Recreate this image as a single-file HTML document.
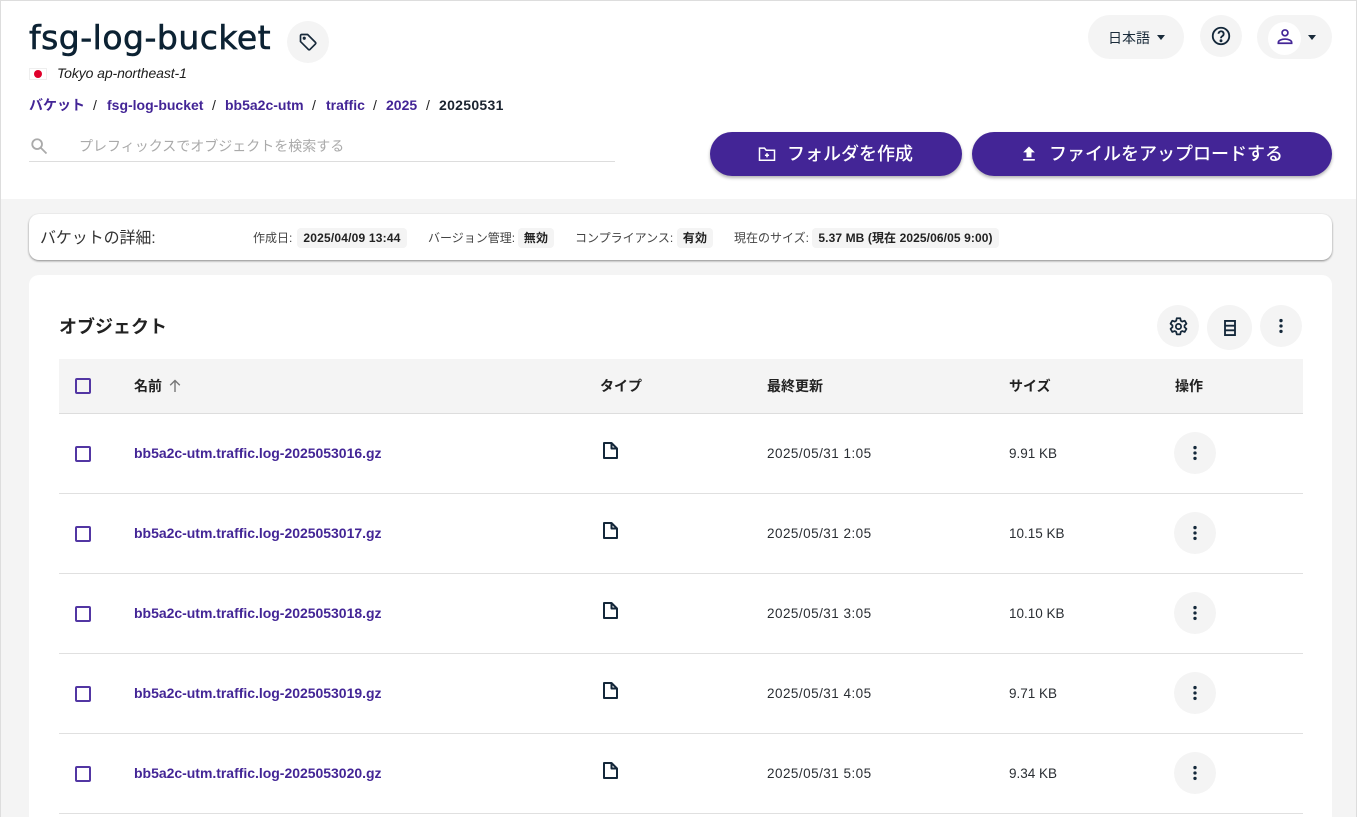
<!DOCTYPE html>
<html lang="ja"><head><meta charset="utf-8"><title>fsg-log-bucket</title>
<style>
*{box-sizing:border-box}
html,body{margin:0;padding:0;width:1357px;height:817px;overflow:hidden;background:#f4f4f4}
body{position:relative;font-family:"Liberation Sans","Noto Sans CJK JP",sans-serif;color:#1f2329}
.a{position:absolute;white-space:nowrap}
.hdr{left:0;top:0;width:1357px;height:199px;background:#fff;border-top:1px solid #ddd;border-left:1px solid #ddd;border-right:1px solid #ddd}
.edge{left:0;top:199px;width:1px;height:618px;background:#ddd}
.edge2{left:1356px;top:199px;width:1px;height:618px;background:#ddd}
.c{border-radius:50%;background:#f4f4f4;display:flex;align-items:center;justify-content:center}
.pill{background:#f4f4f4;border-radius:22px}
a{color:#432596;text-decoration:none}
.bc{font-size:14px;font-weight:700;top:97px;line-height:16px}
.sl{font-weight:400;color:#222}
.btn{background:#432596;border-radius:22px;height:44px;top:132px;box-shadow:0 2px 3px rgba(0,0,0,.3);color:#fff;font-size:18px;font-weight:500;line-height:44px}
.lbl{font-size:12px;color:#444;top:230px;line-height:16px}
.val{font-size:12px;font-weight:700;top:228px;height:20px;line-height:20px;background:#f4f4f4;border-radius:4px;text-align:center;color:#222;letter-spacing:.2px}
.th{font-size:14px;font-weight:700;top:377px;line-height:18px;color:#222}
.cb{left:75px;width:15.500px;height:16px;border:2px solid #5236a3;border-radius:2px}
.row{left:59px;width:1244px;height:1px;background:#e0e0e0}
.name{left:134px;font-size:14px;font-weight:700;line-height:18px;letter-spacing:-.02px}
.td{font-size:13.500px;line-height:18px;color:#2a2e33}
.dt{letter-spacing:.47px}
</style></head><body>
<div class="a hdr"></div><div class="a edge"></div><div class="a edge2"></div>

<div class="a" style="left:29px;top:18px;font-family:'DejaVu Sans',sans-serif;font-size:33px;line-height:40px;font-weight:400;color:#0c2233;letter-spacing:.5px;-webkit-text-stroke:.6px #0c2233">fsg-log-bucket</div>
<div class="a c" style="left:287px;top:21px;width:42px;height:42px"><svg width="20" height="20" viewBox="0 0 24 24" fill="none" stroke="#17293a" stroke-width="2" stroke-linejoin="round"><path d="M3 4.500A1.500 1.500 0 0 1 4.500 3h7l9.300 9.300a1.600 1.600 0 0 1 0 2.200l-6.300 6.300a1.600 1.600 0 0 1-2.200 0L3 11.500z"/><circle cx="7.500" cy="7.500" r=".9" fill="#17293a"/></svg></div>
<div class="a" style="left:29px;top:68px;width:18px;height:12px;background:#fff;border:1px solid #eee"></div>
<div class="a" style="left:34px;top:70px;width:8px;height:8px;border-radius:50%;background:#e0002b"></div>
<div class="a" style="left:57px;top:65px;font-size:14px;line-height:16px;font-style:italic;color:#1c1c1c;letter-spacing:-.1px">Tokyo ap-northeast-1</div>

<div class="a bc" style="left:29px"><a>バケット</a></div>
<div class="a bc sl" style="left:93px">/</div>
<div class="a bc" style="left:107px"><a>fsg-log-bucket</a></div>
<div class="a bc sl" style="left:212px">/</div>
<div class="a bc" style="left:225px"><a>bb5a2c-utm</a></div>
<div class="a bc sl" style="left:312px">/</div>
<div class="a bc" style="left:326px"><a>traffic</a></div>
<div class="a bc sl" style="left:373px">/</div>
<div class="a bc" style="left:386px"><a>2025</a></div>
<div class="a bc sl" style="left:426px">/</div>
<div class="a bc" style="left:439px;color:#1b2430;letter-spacing:.3px">20250531</div>

<svg class="a" style="left:30px;top:137px" width="18" height="18" viewBox="0 0 24 24" fill="none" stroke="#aaa" stroke-width="2.400"><circle cx="9.500" cy="9.500" r="6.500"/><path d="M14.500 14.500L22 22"/></svg>
<div class="a" style="left:79px;top:137px;font-size:14px;line-height:18px;color:#aaa">プレフィックスでオブジェクトを検索する</div>
<div class="a" style="left:29px;top:161px;width:586px;height:1px;background:#ddd"></div>

<div class="a pill" style="left:1088px;top:15px;width:96px;height:44px"></div>
<div class="a" style="left:1108px;top:29px;font-size:14px;line-height:18px;color:#1a2b3a">日本語</div>
<div class="a" style="left:1157px;top:35px;width:0;height:0;border:4.500px solid transparent;border-top:5px solid #1a2b3a;border-bottom:0"></div>
<div class="a c" style="left:1200px;top:15px;width:42px;height:42px"><svg width="22" height="22" viewBox="0 0 24 24" fill="none" stroke="#14283a" stroke-width="2"><circle cx="12" cy="12" r="9"/><path d="M9.300 9.600a2.800 2.800 0 1 1 4.300 2.400c-1 .6-1.600 1.200-1.600 2.400"/><circle cx="12" cy="17.200" r=".6" fill="#14283a"/></svg></div>
<div class="a pill" style="left:1257px;top:15px;width:75px;height:44px"></div>
<div class="a c" style="left:1268px;top:22px;width:33px;height:33px;background:#fff"></div>
<svg class="a" style="left:1275px;top:27px" width="20" height="20" viewBox="0 0 24 24" fill="none" stroke="#432596" stroke-width="2"><circle cx="12" cy="7" r="3.500"/><path d="M4 19.500v-1c0-2.500 4-4 8-4s8 1.500 8 4v1z"/></svg>
<div class="a" style="left:1308px;top:35px;width:0;height:0;border:4.500px solid transparent;border-top:5px solid #1a2b3a;border-bottom:0"></div>

<div class="a btn" style="left:710px;width:252px"><svg style="position:absolute;left:47px;top:12px" width="20" height="20" viewBox="0 0 24 24" fill="none" stroke="#fff" stroke-width="1.800"><path d="M3 5h6l2 2.500h10v12H3z"/><path d="M12 11v5M9.500 13.500h5"/></svg><span style="position:absolute;left:77px">フォルダを作成</span></div>
<div class="a btn" style="left:972px;width:360px"><svg style="position:absolute;left:47px;top:12px" width="20" height="20" viewBox="0 0 24 24" fill="#fff"><path d="M9 16V10H5l7-7 7 7h-4v6zM5 18h14v2H5z"/></svg><span style="position:absolute;left:77px">ファイルをアップロードする</span></div>

<div class="a" style="left:29px;top:214px;width:1303px;height:46px;background:#fff;border-radius:10px;box-shadow:0 1px 2px rgba(0,0,0,.45)"></div>
<div class="a" style="left:40px;top:230px;font-size:16px;line-height:18px;color:#333;letter-spacing:-.1px">バケットの詳細:</div>
<div class="a lbl" style="left:253px">作成日:</div>
<div class="a val" style="left:297px;width:110px">2025/04/09 13:44</div>
<div class="a lbl" style="left:428px">バージョン管理:</div>
<div class="a val" style="left:518px;width:36px">無効</div>
<div class="a lbl" style="left:575px">コンプライアンス:</div>
<div class="a val" style="left:677px;width:36px">有効</div>
<div class="a lbl" style="left:734px">現在のサイズ:</div>
<div class="a val" style="left:812px;width:187px;letter-spacing:.1px">5.37 MB (現在 2025/06/05 9:00)</div>

<div class="a" style="left:29px;top:275px;width:1303px;height:560px;background:#fff;border-radius:10px"></div>
<div class="a" style="left:59px;top:317px;font-size:18px;line-height:20px;font-weight:700;color:#222">オブジェクト</div>

<div class="a c" style="left:1157px;top:305px;width:42px;height:42px"><svg width="21" height="21" viewBox="0 0 24 24" fill="none" stroke="#14283a" stroke-width="2" stroke-linejoin="round"><circle cx="12" cy="12" r="3"/><path d="M10 2.500h4l.6 2.900 1.700 1 2.800-1 2 3.400-2.200 2 0 2 2.200 1.900-2 3.500-2.800-1-1.700 1-.6 2.800h-4l-.6-2.800-1.700-1-2.800 1-2-3.500 2.200-1.900v-2l-2.200-2 2-3.400 2.800 1 1.700-1z"/></svg></div>
<div class="a c" style="left:1207px;top:305px;width:45px;height:45px"><svg width="20" height="20" viewBox="0 0 24 24" fill="none" stroke="#14283a" stroke-width="2.200"><path d="M6 3.500h12v17H6zM6 9.200h12M6 14.800h12"/></svg></div>
<div class="a c" style="left:1260px;top:305px;width:42px;height:42px"><svg width="20" height="20" viewBox="0 0 24 24" fill="#14283a"><circle cx="12" cy="5.500" r="2"/><circle cx="12" cy="12" r="2"/><circle cx="12" cy="18.500" r="2"/></svg></div>

<div class="a" style="left:59px;top:359px;width:1244px;height:55px;background:#f4f4f4;border-bottom:1px solid #ddd"></div>
<div class="a cb" style="top:378px"></div>
<div class="a th" style="left:134px">名前</div>
<svg class="a" style="left:167px;top:378px" width="16" height="16" viewBox="0 0 16 16" fill="none" stroke="#777" stroke-width="1.400"><path d="M8 14V2.500M3.200 7.200L8 2.500l4.800 4.700"/></svg>
<div class="a th" style="left:600px">タイプ</div>
<div class="a th" style="left:767px">最終更新</div>
<div class="a th" style="left:1009px">サイズ</div>
<div class="a th" style="left:1175px">操作</div>

<div class="a cb" style="top:446px"></div>
<a class="a name" style="top:444px">bb5a2c-utm.traffic.log-2025053016.gz</a>
<svg class="a" style="left:601px;top:441px" width="20" height="20" viewBox="0 0 20 20" fill="none" stroke="#14283a" stroke-width="2" stroke-linejoin="round"><path d="M3 2h7.500L16 7.500V17H3z"/><path d="M10.500 2v5.500H16"/></svg>
<div class="a td dt" style="left:767px;top:445px">2025/05/31 1:05</div>
<div class="a td" style="left:1009px;top:445px">9.91 KB</div>
<div class="a c" style="left:1174px;top:432px;width:42px;height:42px"><svg width="20" height="20" viewBox="0 0 24 24" fill="#14283a"><circle cx="12" cy="5.500" r="2"/><circle cx="12" cy="12" r="2"/><circle cx="12" cy="18.500" r="2"/></svg></div>
<div class="a row" style="top:493px"></div>

<div class="a cb" style="top:526px"></div>
<a class="a name" style="top:524px">bb5a2c-utm.traffic.log-2025053017.gz</a>
<svg class="a" style="left:601px;top:521px" width="20" height="20" viewBox="0 0 20 20" fill="none" stroke="#14283a" stroke-width="2" stroke-linejoin="round"><path d="M3 2h7.500L16 7.500V17H3z"/><path d="M10.500 2v5.500H16"/></svg>
<div class="a td dt" style="left:767px;top:525px">2025/05/31 2:05</div>
<div class="a td" style="left:1009px;top:525px">10.15 KB</div>
<div class="a c" style="left:1174px;top:512px;width:42px;height:42px"><svg width="20" height="20" viewBox="0 0 24 24" fill="#14283a"><circle cx="12" cy="5.500" r="2"/><circle cx="12" cy="12" r="2"/><circle cx="12" cy="18.500" r="2"/></svg></div>
<div class="a row" style="top:573px"></div>

<div class="a cb" style="top:606px"></div>
<a class="a name" style="top:604px">bb5a2c-utm.traffic.log-2025053018.gz</a>
<svg class="a" style="left:601px;top:601px" width="20" height="20" viewBox="0 0 20 20" fill="none" stroke="#14283a" stroke-width="2" stroke-linejoin="round"><path d="M3 2h7.500L16 7.500V17H3z"/><path d="M10.500 2v5.500H16"/></svg>
<div class="a td dt" style="left:767px;top:605px">2025/05/31 3:05</div>
<div class="a td" style="left:1009px;top:605px">10.10 KB</div>
<div class="a c" style="left:1174px;top:592px;width:42px;height:42px"><svg width="20" height="20" viewBox="0 0 24 24" fill="#14283a"><circle cx="12" cy="5.500" r="2"/><circle cx="12" cy="12" r="2"/><circle cx="12" cy="18.500" r="2"/></svg></div>
<div class="a row" style="top:653px"></div>

<div class="a cb" style="top:686px"></div>
<a class="a name" style="top:684px">bb5a2c-utm.traffic.log-2025053019.gz</a>
<svg class="a" style="left:601px;top:681px" width="20" height="20" viewBox="0 0 20 20" fill="none" stroke="#14283a" stroke-width="2" stroke-linejoin="round"><path d="M3 2h7.500L16 7.500V17H3z"/><path d="M10.500 2v5.500H16"/></svg>
<div class="a td dt" style="left:767px;top:685px">2025/05/31 4:05</div>
<div class="a td" style="left:1009px;top:685px">9.71 KB</div>
<div class="a c" style="left:1174px;top:672px;width:42px;height:42px"><svg width="20" height="20" viewBox="0 0 24 24" fill="#14283a"><circle cx="12" cy="5.500" r="2"/><circle cx="12" cy="12" r="2"/><circle cx="12" cy="18.500" r="2"/></svg></div>
<div class="a row" style="top:733px"></div>

<div class="a cb" style="top:766px"></div>
<a class="a name" style="top:764px">bb5a2c-utm.traffic.log-2025053020.gz</a>
<svg class="a" style="left:601px;top:761px" width="20" height="20" viewBox="0 0 20 20" fill="none" stroke="#14283a" stroke-width="2" stroke-linejoin="round"><path d="M3 2h7.500L16 7.500V17H3z"/><path d="M10.500 2v5.500H16"/></svg>
<div class="a td dt" style="left:767px;top:765px">2025/05/31 5:05</div>
<div class="a td" style="left:1009px;top:765px">9.34 KB</div>
<div class="a c" style="left:1174px;top:752px;width:42px;height:42px"><svg width="20" height="20" viewBox="0 0 24 24" fill="#14283a"><circle cx="12" cy="5.500" r="2"/><circle cx="12" cy="12" r="2"/><circle cx="12" cy="18.500" r="2"/></svg></div>
<div class="a row" style="top:813px"></div>
</body></html>
